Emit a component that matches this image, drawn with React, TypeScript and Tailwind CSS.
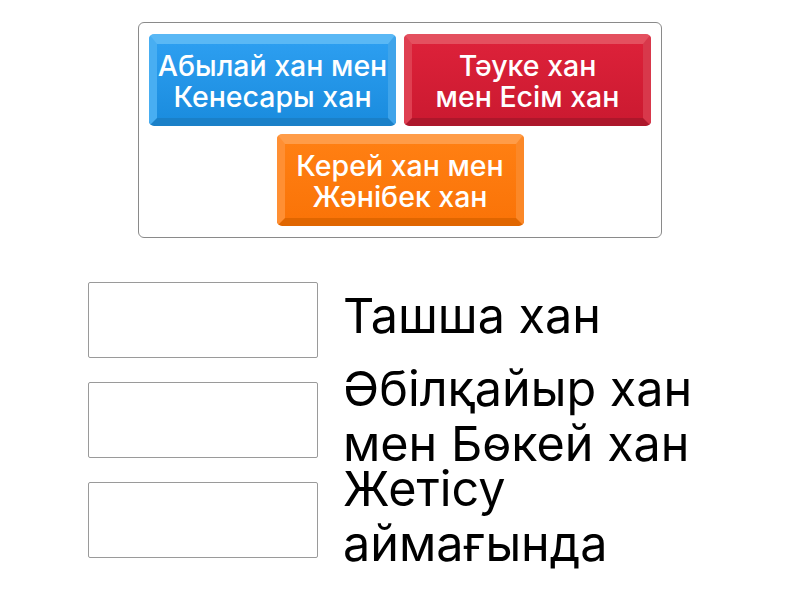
import React from "react";

function Tile({ text, tone }: { text: string[]; tone: "blue" | "red" | "orange" }) {
  const outer =
    tone === "blue"
      ? "bg-gradient-to-b from-[#2c9ef0] to-[#1b8ddf] border-t-[#5ab8f5] border-l-[#48aef2] border-r-[#3fa4ea] border-b-[#1a80c8]"
      : tone === "red"
      ? "bg-gradient-to-b from-[#dc2139] to-[#cc1a31] border-t-[#e4505f] border-l-[#df3f51] border-r-[#d8384b] border-b-[#ad172b]"
      : "bg-gradient-to-b from-[#ff7f12] to-[#fa7408] border-t-[#ff9c48] border-l-[#ff8f33] border-r-[#fb8828] border-b-[#e06600]";
  return (
    <div
      className={`w-[247px] h-[92px] rounded-[5px] border-t-[10px] border-b-[8px] border-x-[8px] flex flex-col items-center justify-center text-white font-medium text-[28.5px] leading-[31px] ${outer}`}
      style={{ fontFamily: "Inter, 'Noto Sans', sans-serif" }}
    >
      {text.map((t) => (
        <div key={t} className="whitespace-nowrap">{t}</div>
      ))}
    </div>
  );
}

function Row({ lines }: { lines: string[] }) {
  return (
    <div className="flex items-center h-[76px] mb-[24px]">
      <div className="w-[230px] h-[76px] border border-[#9a9a9a] rounded-[2px] bg-white shrink-0" />
      <div
        className="ml-[25px] pb-[9px] text-[48.5px] leading-[55px] text-black font-normal"
        style={{ fontFamily: "Inter, 'Noto Sans', sans-serif" }}
      >
        {lines.map((l) => (
          <div key={l} className="whitespace-nowrap">{l}</div>
        ))}
      </div>
    </div>
  );
}

export default function App() {
  return (
    <div className="w-[800px] h-[600px] bg-white relative overflow-hidden">
      <div className="pt-[22px] flex justify-center">
        <div className="w-[524px] h-[216px] border border-[#8a8a8a] rounded-[6px] pt-[11px] px-[10px] flex flex-col items-center gap-[8px]">
          <div className="flex gap-[8px]">
            <Tile tone="blue" text={["Абылай хан мен", "Кенесары хан"]} />
            <Tile tone="red" text={["Тәуке хан", "мен Есім хан"]} />
          </div>
          <Tile tone="orange" text={["Керей хан мен", "Жәнібек хан"]} />
        </div>
      </div>
      <div className="pl-[88px] pt-[44px]">
        <Row lines={["Ташша хан"]} />
        <Row lines={["Әбілқайыр хан", "мен Бөкей хан"]} />
        <Row lines={["Жетісу", "аймағында"]} />
      </div>
    </div>
  );
}
